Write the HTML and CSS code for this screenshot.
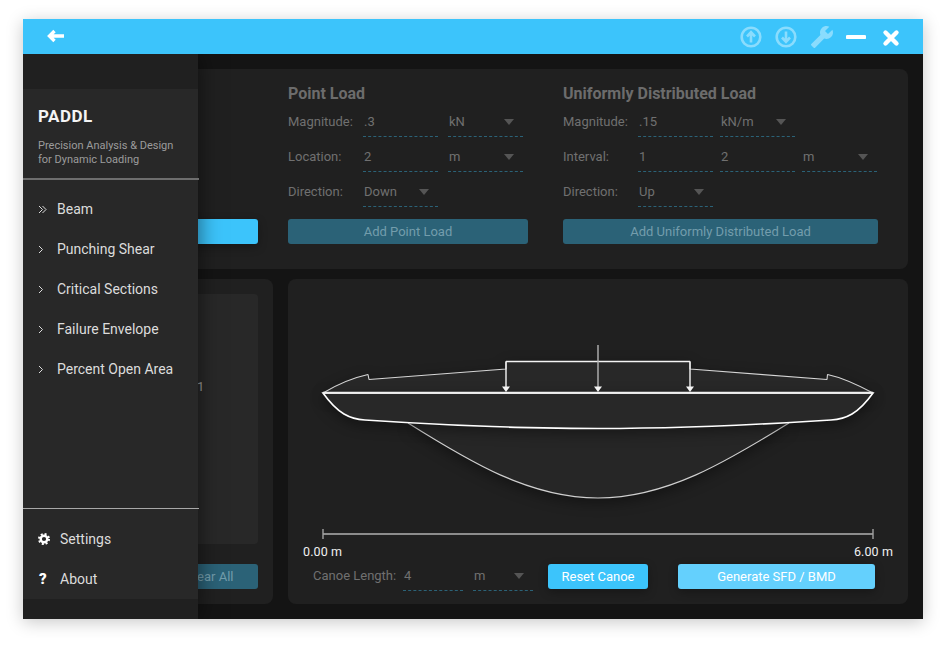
FILE: index.html
```html
<!DOCTYPE html>
<html lang="en">

<head>
    <meta charset="UTF-8">
    <title>PADDL</title>
    <link rel="stylesheet" href="styles.css">
</head>

<body>
    <div class="window">
        <header class="titlebar">
            <svg class="icon-back" width="18" height="14" viewBox="0 0 18 14">
                <path d="M17 7H3M7.5 2 2.5 7l5 5" fill="none" stroke="#fff" stroke-width="3.4" />
            </svg>
            <div class="titlebar-actions">
                <svg class="icon-dim" width="22" height="22" viewBox="0 0 22 22">
                    <circle cx="11" cy="11" r="9.3" fill="none" stroke="#8adcfd" stroke-width="2.6" />
                    <path d="M11 16.5V8M7 10.5l4-4.3 4 4.3" fill="none" stroke="#8adcfd" stroke-width="2.6" />
                </svg>
                <svg class="icon-dim" width="22" height="22" viewBox="0 0 22 22">
                    <circle cx="11" cy="11" r="9.3" fill="none" stroke="#8adcfd" stroke-width="2.6" />
                    <path d="M11 5.5V14M7 11.5l4 4.3 4-4.3" fill="none" stroke="#8adcfd" stroke-width="2.6" />
                </svg>
                <svg class="icon-wrench" width="24" height="24" viewBox="0 0 24 24">
                    <path fill="#8adcfd" d="M1.3 19l9.1-9.1c-.9-2.3-.4-5 1.5-6.9 2-2 5-2.4 7.4-1.3L15 6l3 3 4.4-4.3c1.2 2.4.7 5.4-1.3 7.4-1.9 1.9-4.6 2.4-6.9 1.5l-9.1 9.1c-.4.4-1 .4-1.4 0l-2.3-2.3c-.5-.4-.5-1.1-.1-1.4z" />
                </svg>
                <svg class="icon-min" width="20" height="6" viewBox="0 0 20 6">
                    <path d="M1.5 3h17" stroke="#fff" stroke-width="4" stroke-linecap="round" />
                </svg>
                <svg class="icon-close" width="18" height="18" viewBox="0 0 18 18">
                    <path d="M3.5 3.5l11 11M14.5 3.5l-11 11" stroke="#fff" stroke-width="4.4" stroke-linecap="round" />
                </svg>
            </div>
        </header>

        <div class="workspace">
            <aside class="sidebar">
                <div class="sidebar-inner">
                    <div class="brand">
                        <h1>PADDL</h1>
                        <p>Precision Analysis &amp; Design<br>for Dynamic Loading</p>
                    </div>
                    <nav class="nav">
                        <a class="nav-item">
                            <svg class="chevron" width="9" height="9" viewBox="0 0 9 9"><path d="M1 1l3.5 3.5L1 8M4.5 1 8 4.5 4.5 8" fill="none" stroke="#ddd" /></svg>
                            Beam
                        </a>
                        <a class="nav-item">
                            <svg class="chevron" width="9" height="9" viewBox="0 0 9 9"><path d="M1 1l3.5 3.5L1 8" fill="none" stroke="#ddd" /></svg>
                            Punching Shear
                        </a>
                        <a class="nav-item">
                            <svg class="chevron" width="9" height="9" viewBox="0 0 9 9"><path d="M1 1l3.5 3.5L1 8" fill="none" stroke="#ddd" /></svg>
                            Critical Sections
                        </a>
                        <a class="nav-item">
                            <svg class="chevron" width="9" height="9" viewBox="0 0 9 9"><path d="M1 1l3.5 3.5L1 8" fill="none" stroke="#ddd" /></svg>
                            Failure Envelope
                        </a>
                        <a class="nav-item">
                            <svg class="chevron" width="9" height="9" viewBox="0 0 9 9"><path d="M1 1l3.5 3.5L1 8" fill="none" stroke="#ddd" /></svg>
                            Percent Open Area
                        </a>
                    </nav>
                    <div class="nav-footer">
                        <a class="nav-item">
                            <svg class="foot-icon" width="12" height="12" viewBox="0 0 12 12">
                                <circle cx="6" cy="6" r="3.3" fill="none" stroke="#fff" stroke-width="2.4" />
                                <circle cx="6" cy="6" r="5" fill="none" stroke="#fff" stroke-width="2" stroke-dasharray="2 1.93" />
                            </svg>
                            Settings
                        </a>
                        <a class="nav-item">
                            <span class="foot-icon help">?</span>
                            About
                        </a>
                    </div>
                </div>
            </aside>

            <section class="panel loads">
                <div class="col-support">
                    <button class="btn btn-add-support"></button>
                </div>

                <div class="col-point">
                    <h2>Point Load</h2>
                    <div class="field-row">
                        <label>Magnitude:</label>
                        <input class="input" value=".3">
                        <div class="select">kN</div>
                    </div>
                    <div class="field-row">
                        <label>Location:</label>
                        <input class="input" value="2">
                        <div class="select">m</div>
                    </div>
                    <div class="field-row">
                        <label>Direction:</label>
                        <div class="select">Down</div>
                    </div>
                    <button class="btn btn-muted">Add Point Load</button>
                </div>

                <div class="col-udl">
                    <h2>Uniformly Distributed Load</h2>
                    <div class="field-row">
                        <label>Magnitude:</label>
                        <input class="input" value=".15">
                        <div class="select narrow-gap">kN/m</div>
                    </div>
                    <div class="field-row">
                        <label>Interval:</label>
                        <input class="input" value="1">
                        <input class="input narrow-gap" value="2">
                        <div class="select narrow-gap">m</div>
                    </div>
                    <div class="field-row">
                        <label>Direction:</label>
                        <div class="select">Up</div>
                    </div>
                    <button class="btn btn-muted">Add Uniformly Distributed Load</button>
                </div>
            </section>

            <div class="lower">
                <section class="panel load-list">
                    <div class="list-box">
                        <div class="list-row">1</div>
                    </div>
                    <button class="btn btn-muted btn-clear">Clear All</button>
                </section>

                <section class="panel canoe">
                    <svg class="canoe-svg" width="620" height="265" viewBox="288 279 620 265">
                        <g class="hull-shape">
                            <path d="M408 423C470 462 530 498 598 498S726 462 789 423" fill="#262626" stroke="#cfcfcf" stroke-width="1.1" />
                        </g>
                        <g class="hull-shape">
                            <path d="M323 393C338 384 352 378 368 374.5L369 379.5 506 369V361.5H690V369L827 379.5 827.5 374.5C844 378 858 385 873 393Z" fill="#282828" stroke="#d6d6d6" stroke-width="1.1" stroke-linejoin="bevel" />
                        </g>
                        <g class="hull-shape">
                            <path d="M323 393C338 414 350 419 365 420 440 425 520 428.5 598 428.5S756 425 831 420C846 419 858 414 873 393Z" fill="#282828" stroke="#fff" stroke-width="1.6" />
                        </g>
                        <path d="M323 392.7H873" stroke="#f0f0f0" stroke-width="2" />
                        <path d="M506 361.5H690M506 361.5V388M690 361.5V388" fill="none" stroke="#f4f4f4" stroke-width="1.4" />
                        <path d="M598 345V388" stroke="#b4b4b4" stroke-width="1.4" />
                        <path d="M502 386.5h8L506 392ZM594 386.5h8L598 392ZM686 386.5h8L690 392Z" fill="#f4f4f4" />
                        <path d="M323 534H873" stroke="#8c8c8c" stroke-width="2" />
                        <path d="M323 529V539M873 529V539" stroke="#a0a0a0" stroke-width="1.4" />
                    </svg>
                    <div class="scale-labels">
                        <span>0.00 m</span>
                        <span>6.00 m</span>
                    </div>
                    <div class="canoe-controls">
                        <label>Canoe Length:</label>
                        <input class="input input-short" value="4">
                        <div class="select input-short">m</div>
                        <button class="btn btn-primary btn-reset">Reset Canoe</button>
                        <button class="btn btn-generate">Generate SFD / BMD</button>
                    </div>
                </section>
            </div>
        </div>
    </div>
</body>

</html>
```

FILE: styles.css
```css
:root {
    --blue: #3cc4fb;
    --blue-light: #64d0fd;
    --blue-muted: #2b6277;
    --panel: #202020;
    --side: #282828;
    --field-text: #707070;
}

* {
    margin: 0;
    padding: 0;
    box-sizing: border-box;
}

body {
    background: #fff;
    font-family: Roboto, "Liberation Sans", sans-serif;
    overflow: hidden;
}

.window {
    width: 900px;
    height: 600px;
    margin: 19px 23px;
    display: flex;
    flex-direction: column;
    box-shadow: 0 3px 16px rgba(0, 0, 0, 0.22);
}

.titlebar {
    height: 35px;
    flex-shrink: 0;
    background: var(--blue);
    display: flex;
    align-items: center;
    justify-content: space-between;
    padding: 0 23px 0 24px;
    position: relative;
    z-index: 3;
}

.titlebar-actions {
    display: flex;
    align-items: center;
}

.icon-back {
    margin-bottom: 1px;
}

.icon-dim {
    margin-right: 13px;
}

.icon-wrench {
    margin-right: 12px;
}

.icon-min {
    margin-right: 16px;
}

.icon-close {
    margin-top: 2px;
}

.workspace {
    flex: 1;
    position: relative;
    overflow: hidden;
    background: #141414;
    padding: 15px;
    display: flex;
    flex-direction: column;
    gap: 10px;
}

.sidebar {
    position: absolute;
    top: 0;
    left: 0;
    bottom: 0;
    width: 175px;
    padding: 35px 0 20px;
    background: var(--panel);
    box-shadow: 0 0 22px rgba(0, 0, 0, 0.55);
    z-index: 2;
}

.sidebar-inner {
    height: 100%;
    background: var(--side);
    display: flex;
    flex-direction: column;
}

.brand {
    height: 91px;
    padding: 17px 15px 0;
    margin-right: -1px;
    border-bottom: 2px solid #6e6e6e;
}

.brand h1 {
    font-size: 17px;
    line-height: 20px;
    font-weight: 700;
    letter-spacing: 0.5px;
    color: #f4f4f4;
}

.brand p {
    margin-top: 13px;
    font-size: 11px;
    line-height: 14px;
    color: #9c9c9c;
}

.nav {
    padding-top: 9px;
}

.nav-item {
    height: 40px;
    display: flex;
    align-items: center;
    padding-left: 15px;
    font-size: 14px;
    color: #dcdcdc;
}

.chevron {
    margin-right: 10px;
}

.nav-footer {
    margin-top: auto;
    margin-right: -1px;
    padding-top: 10px;
    border-top: 1px solid #a8a8a8;
}

.foot-icon {
    width: 12px;
    margin-right: 10px;
    flex-shrink: 0;
}

.help {
    font-size: 15px;
    font-weight: 900;
    color: #fff;
    padding-left: 1px;
}

.panel {
    background: var(--panel);
    border-radius: 8px;
}

.loads {
    height: 200px;
    flex-shrink: 0;
    padding: 15px;
    display: flex;
}

.col-support {
    width: 205px;
    margin-right: 30px;
    display: flex;
    align-items: flex-end;
    padding-bottom: 10px;
}

.col-point {
    width: 240px;
    margin-right: 35px;
}

.col-udl {
    width: 315px;
}

h2 {
    font-size: 16px;
    line-height: 20px;
    font-weight: 700;
    color: #6c6c6c;
    margin-bottom: 7px;
}

.field-row {
    display: flex;
    align-items: flex-start;
    height: 35px;
}

label {
    width: 75px;
    flex-shrink: 0;
    font-size: 13px;
    line-height: 22px;
    color: var(--field-text);
}

.input,
.select {
    width: 75px;
    height: 26px;
    flex-shrink: 0;
    padding: 0 1px 4px;
    font: 13px/22px Roboto, "Liberation Sans", sans-serif;
    color: var(--field-text);
    background: none;
    border: none;
    border-bottom: 1px dashed #2b6277;
    outline: none;
}

.input+.select,
.input+.input {
    margin-left: 10px;
}

.input+.narrow-gap,
.select.narrow-gap {
    margin-left: 7px;
}

.select {
    position: relative;
}

.select::after {
    content: '';
    position: absolute;
    top: 8px;
    right: 9px;
    border: 5px solid transparent;
    border-top: 6px solid #555;
    border-bottom: none;
}

.btn {
    height: 25px;
    border: none;
    border-radius: 3px;
    font: 13px Roboto, "Liberation Sans", sans-serif;
    box-shadow: 0 3px 10px rgba(0, 0, 0, 0.3);
}

.btn-add-support {
    width: 205px;
    background: var(--blue);
}

.btn-muted {
    width: 100%;
    margin-top: 3px;
    background: var(--blue-muted);
    color: #739dac;
    box-shadow: none;
}

.lower {
    flex: 1;
    display: flex;
    gap: 15px;
    min-height: 0;
}

.load-list {
    width: 235px;
    padding: 15px;
    display: flex;
    flex-direction: column;
    align-items: flex-end;
}

.list-box {
    width: 100%;
    height: 250px;
    background: var(--side);
    border-radius: 4px;
    padding: 85px 0 0 144px;
}

.list-row {
    font-size: 13px;
    line-height: 16px;
    color: #9c9c9c;
}

.btn-clear {
    width: 97px;
    margin-top: 20px;
}

.canoe {
    width: 620px;
}

.canoe-svg {
    display: block;
}

.hull-shape {
    filter: drop-shadow(0 4px 7px rgba(0, 0, 0, 0.4));
}

.scale-labels {
    display: flex;
    justify-content: space-between;
    padding: 0 15px;
    height: 16px;
    font-size: 12.5px;
    line-height: 16px;
    letter-spacing: 0.1px;
    color: #f0f0f0;
}

.canoe-controls {
    display: flex;
    align-items: flex-start;
    margin-top: 4px;
    padding-left: 25px;
}

.canoe-controls label {
    width: 90px;
    line-height: 24px;
}

.input-short {
    width: 60px;
    height: 27px;
}

.canoe-controls .input,
.canoe-controls .select {
    line-height: 24px;
}

.canoe-controls .select::after {
    top: 9px;
    right: 9px;
}

.btn-primary {
    background: var(--blue);
    color: #fff;
}

.btn-reset {
    width: 100px;
    margin-left: 15px;
}

.btn-generate {
    width: 197px;
    margin-left: 30px;
    background: var(--blue-light);
    color: #fff;
}
```
